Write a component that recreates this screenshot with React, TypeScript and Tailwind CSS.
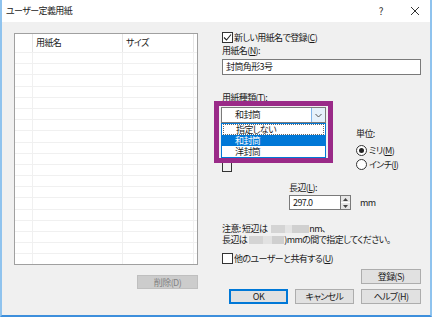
import React from 'react';

// Small check box, drawn as in the Windows 10 dialog
function CheckBox({ checked }: { checked?: boolean }) {
  return (
    <span className="inline-flex h-[11px] w-[11px] shrink-0 items-center justify-center border border-[#333333] bg-white">
      {checked && (
        <svg width="9" height="9" viewBox="0 0 9 9">
          <path d="M1 4.5 L3.5 7 L8 1.5" fill="none" stroke="#222" strokeWidth="1.1" />
        </svg>
      )}
    </span>
  );
}

function Radio({ checked }: { checked?: boolean }) {
  return (
    <span className="inline-flex h-[11px] w-[11px] shrink-0 items-center justify-center rounded-full border border-[#333333] bg-white">
      {checked && <span className="h-[5px] w-[5px] rounded-full bg-[#222]" />}
    </span>
  );
}

function Button({ label, focused, className }: { label: string; focused?: boolean; className?: string }) {
  return (
    <div
      className={
        'flex h-[15px] items-center justify-center bg-[#e1e1e1] leading-none ' +
        (focused ? 'border-2 border-[#0078d7] ' : 'border border-[#adadad] ') +
        (className ?? '')
      }
    >
      {label}
    </div>
  );
}

const rows = Array.from({ length: 19 });

export default function App() {
  return (
    <div className="h-[317px] w-[432px] overflow-hidden bg-white font-['Noto_Sans_CJK_JP','Noto_Sans',sans-serif] text-[9px] leading-[10px] tracking-[-0.6px] text-[#1a1a1a] [font-feature-settings:'palt']">
      <div className="flex h-[317px] flex-col border-x-2 border-b-2 border-x-[#8fc3ee] border-b-[#3d8fdc]">
        {/* title bar */}
        <div className="flex h-[22px] shrink-0 items-center bg-white pl-[4px]">
          <span>ユーザー定義用紙</span>
          <span className="ml-auto mr-[27px] text-[10px] text-[#333]">?</span>
          <svg className="mr-[10px]" width="10" height="10" viewBox="0 0 10 10">
            <path d="M1 1 L9 9 M9 1 L1 9" stroke="#333" strokeWidth="1" />
          </svg>
        </div>

        {/* body */}
        <div className="flex flex-1 bg-[#f0f0f0]">
          {/* left column: list of custom sizes */}
          <div className="flex w-[212px] shrink-0 flex-col pl-[12px] pr-[16px] pt-[11px]">
            <div className="h-[232px] w-[184px] overflow-hidden border border-[#a0a0a0] bg-white">
              <div className="flex h-[18px] leading-[18px]">
                <div className="w-[18px] border-r border-[#e5e5e5]" />
                <div className="w-[90px] border-r border-[#e5e5e5] pl-[3px]">用紙名</div>
                <div className="w-[71px] border-r border-[#e5e5e5] pl-[3px]">サイズ</div>
                <div className="flex-1" />
              </div>
              {rows.map((_, i) => (
                <div key={i} className="flex h-[11.2px] border-t border-[#f0f0f0]">
                  <div className="w-[18px] border-r border-[#f0f0f0]" />
                  <div className="w-[90px] border-r border-[#f0f0f0]" />
                  <div className="w-[71px] border-r border-[#f0f0f0]" />
                  <div className="flex-1" />
                </div>
              ))}
            </div>
            <div className="mt-[10px] flex h-[14px] w-[61px] items-center justify-center self-end border border-[#bfbfbf] bg-[#cccccc] leading-none text-[#838383]">
              削除(D)
            </div>
          </div>

          {/* right column: settings */}
          <div className="flex flex-1 flex-col pt-[10px]">
            <div className="ml-[8px] flex h-[11px] items-center gap-[1px]">
              <CheckBox checked />
              <span>新しい用紙名で登録(<u>C</u>)</span>
            </div>
            <div className="ml-[8px] mt-[3px] h-[10px]">用紙名(<u>N</u>):</div>
            <div className="ml-[8px] mt-[3px] flex h-[16px] w-[199px] items-center border border-[#7a7a7a] bg-white pl-[3px]">
              封筒角形3号
            </div>
            <div className="ml-[8px] mt-[18px] h-[8px] overflow-hidden">用紙種類(<u>T</u>):</div>

            {/* highlighted combo box with its open list */}
            <div className="relative flex h-[62px] shrink-0 items-start">
              <div className="h-[62px] w-[119px] shrink-0 border-[5px] border-[#9a2a88] bg-[#f0f0f0] pl-[2px] pr-[2px] pt-[1px]">
                <div className="flex h-[16px] items-center border border-[#7a7a7a] bg-white">
                  <span className="ml-[13px]">和封筒</span>
                  <div className="ml-auto flex h-full w-[14px] items-center justify-center border-l border-[#7eb4ea] bg-[#e5f1fb]">
                    <svg width="7" height="5" viewBox="0 0 7 5">
                      <path d="M0.5 1 L3.5 4 L6.5 1" fill="none" stroke="#555" strokeWidth="1" />
                    </svg>
                  </div>
                </div>
                <div className="flex h-[35px] flex-col border border-[#0078d7] bg-white">
                  <div className="mx-[1px] flex h-[11px] items-center border border-dotted border-[#666] pl-[12px]">指定しない</div>
                  <div className="flex h-[11px] items-center bg-[#0078d7] pl-[13px] text-white">和封筒</div>
                  <div className="flex h-[11px] items-center pl-[13px]">洋封筒</div>
                </div>
              </div>
              <div className="ml-[23px] mt-[28px] flex flex-col">
                <div className="h-[10px]">単位:</div>
                <div className="mt-[6px] flex h-[11px] items-center gap-[2px]">
                  <Radio checked />
                  <span>ミリ(<u>M</u>)</span>
                </div>
                <div className="mt-[3px] flex h-[11px] items-center gap-[2px]">
                  <Radio />
                  <span>インチ(<u>I</u>)</span>
                </div>
              </div>
            </div>
            <div className="ml-[8px] h-[9px] w-[10px] shrink-0 border-x border-b border-[#333]" />

            {/* long edge */}
            <div className="ml-[75px] mt-[11px] h-[10px]">長辺(<u>L</u>):</div>
            <div className="ml-[75px] mt-[2px] flex h-[15px] items-center">
              <div className="flex h-[15px] w-[52px] items-center border border-[#7a7a7a] bg-white pl-[3px]">297.0</div>
              <div className="flex h-[15px] w-[10px] flex-col border-y border-r border-[#7a7a7a] bg-white">
                <div className="flex flex-1 items-center justify-center bg-[#e6e6e6]">
                  <svg width="5" height="3" viewBox="0 0 5 3"><path d="M0 3 L2.5 0 L5 3 Z" fill="#444" /></svg>
                </div>
                <div className="flex flex-1 items-center justify-center border-t border-white bg-[#e6e6e6]">
                  <svg width="5" height="3" viewBox="0 0 5 3"><path d="M0 0 L2.5 3 L5 0 Z" fill="#444" /></svg>
                </div>
              </div>
              <span className="ml-[9px]">mm</span>
            </div>

            {/* note with hidden values */}
            <div className="ml-[8px] mt-[13px] flex h-[11px] items-center">
              <span>注意: 短辺は</span>
              <span className="ml-[4px] h-[8px] w-[14px] bg-[#d4d4d4]" />
              <span className="h-[8px] w-[7px] bg-[#e4e4e4]" />
              <span className="h-[8px] w-[17px] bg-[#d0d0d0]" />
              <span>nm、</span>
            </div>
            <div className="ml-[8px] flex h-[11px] items-center">
              <span>長辺は</span>
              <span className="ml-[2px] h-[8px] w-[14px] bg-[#d4d4d4]" />
              <span className="h-[8px] w-[9px] bg-[#e2e2e2]" />
              <span className="h-[8px] w-[12px] bg-[#cfcfcf]" />
              <span>)mmの間で指定してください。</span>
            </div>

            <div className="ml-[8px] mt-[8px] flex h-[11px] items-center gap-[1px]">
              <CheckBox />
              <span>他のユーザーと共有する(<u>U</u>)</span>
            </div>

            <Button label="登録(S)" className="mr-[9px] mt-[5px] w-[60px] self-end" />

            <div className="mr-[9px] mt-[5px] flex justify-end gap-[7px]">
              <Button label="OK" focused className="w-[59px]" />
              <Button label="キャンセル" className="w-[59px]" />
              <Button label="ヘルプ(H)" className="w-[60px]" />
            </div>
          </div>
        </div>
      </div>
    </div>
  );
}
